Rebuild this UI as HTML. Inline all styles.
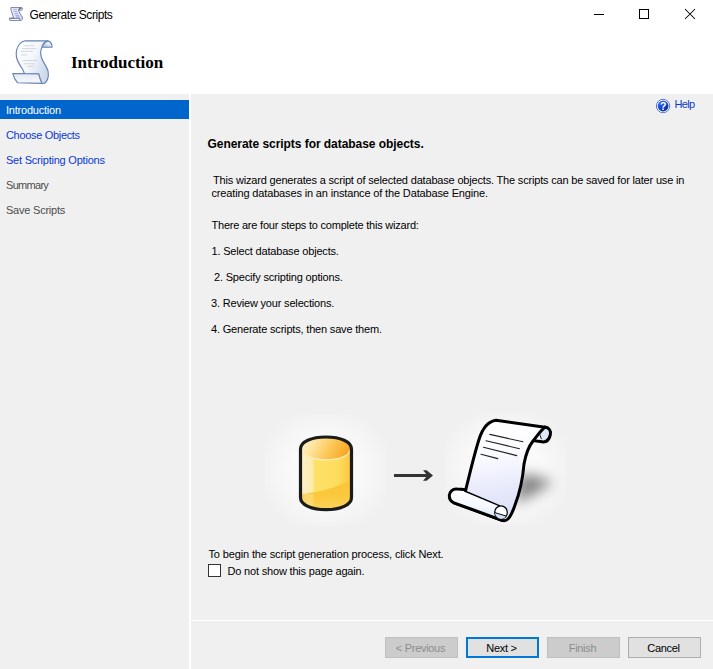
<!DOCTYPE html>
<html>
<head>
<meta charset="utf-8">
<title>Generate Scripts</title>
<style>
html,body{margin:0;padding:0;}
body{width:713px;height:669px;position:relative;overflow:hidden;background:#f0f0f0;font-family:"Liberation Sans",sans-serif;font-size:11px;color:#000;}
.abs{position:absolute;white-space:nowrap;}
#hdr{left:0;top:0;width:713px;height:94px;background:#fff;}
#title{left:29.5px;top:8px;font-size:12px;line-height:14px;letter-spacing:-0.45px;color:#000;}
#h1{left:71px;top:53px;font-family:"Liberation Serif",serif;font-weight:bold;font-size:17px;line-height:20px;color:#000;}
#vdiv{left:189px;top:94px;width:2px;height:575px;background:#fff;}
#hdiv{left:191px;top:620px;width:522px;height:1px;background:#fff;}
#sel{left:0;top:100px;width:189px;height:19px;background:#0066cc;}
.nav{left:6px;line-height:13px;letter-spacing:-0.22px;}
.lnk{color:#0a3ad2;}
.dis{color:#4d4d4d;}
.t{line-height:13px;letter-spacing:-0.18px;}
.btn{top:637px;width:69px;padding-right:2px;height:19px;border:1px solid #adadad;background:#e1e1e1;text-align:center;line-height:21px;letter-spacing:-0.3px;}
.btn.off{background:#cccccc;border-color:#bfbfbf;color:#8c8c8c;}
.btn.def{border:2px solid #0078d7;width:67px;height:17px;line-height:19px;}
</style>
</head>
<body>
<div id="hdr" class="abs"></div>
<div id="title" class="abs">Generate Scripts</div>
<div id="h1" class="abs">Introduction</div>

<div id="vdiv" class="abs"></div>
<div id="hdiv" class="abs"></div>
<div id="sel" class="abs"></div>
<div class="abs nav" style="top:104px;color:#fff;">Introduction</div>
<div class="abs nav lnk" style="top:129px;letter-spacing:-0.32px;">Choose Objects</div>
<div class="abs nav lnk" style="top:154px;">Set Scripting Options</div>
<div class="abs nav dis" style="top:179px;letter-spacing:-0.7px;">Summary</div>
<div class="abs nav dis" style="top:204px;">Save Scripts</div>

<div class="abs lnk" style="left:674.5px;top:98px;line-height:13px;letter-spacing:-0.65px;">Help</div>

<div class="abs" style="left:207.5px;top:137px;font-weight:bold;font-size:12px;line-height:14px;letter-spacing:-0.05px;">Generate scripts for database objects.</div>
<div class="abs t" style="left:213px;top:174px;">This wizard generates a script of selected database objects. The scripts can be saved for later use in</div>
<div class="abs t" style="left:211.5px;top:187px;letter-spacing:-0.15px;">creating databases in an instance of the Database Engine.</div>
<div class="abs t" style="left:211.5px;top:219px;letter-spacing:-0.22px;">There are four steps to complete this wizard:</div>
<div class="abs t" style="left:211.5px;top:245px;">1. Select database objects.</div>
<div class="abs t" style="left:214px;top:271px;">2. Specify scripting options.</div>
<div class="abs t" style="left:211px;top:297px;">3. Review your selections.</div>
<div class="abs t" style="left:211px;top:323px;">4. Generate scripts, then save them.</div>

<div class="abs t" style="left:208.5px;top:548px;letter-spacing:-0.14px;">To begin the script generation process, click Next.</div>
<div class="abs" style="left:208px;top:564px;width:11px;height:11px;border:1px solid #333;background:#fff;"></div>
<div class="abs t" style="left:227.5px;top:565px;">Do not show this page again.</div>

<!--ART-->
<svg class="abs" style="left:240px;top:390px;" width="370" height="160" viewBox="240 390 370 160">
<defs>
<radialGradient id="glow" cx="0.5" cy="0.5" r="0.57">
<stop offset="0" stop-color="#fcfcfc"/><stop offset="0.5" stop-color="#f9f9f9"/><stop offset="0.8" stop-color="#f4f4f4"/><stop offset="1" stop-color="#f0f0f0"/>
</radialGradient>
<linearGradient id="cylTop" x1="0" y1="0.2" x2="1" y2="0.45">
<stop offset="0" stop-color="#fef4cf"/><stop offset="0.3" stop-color="#fde295"/><stop offset="0.6" stop-color="#fcc858"/><stop offset="1" stop-color="#f6a520"/>
</linearGradient>
<linearGradient id="cylBody" x1="0" y1="0" x2="1" y2="0">
<stop offset="0" stop-color="#fde9a6"/><stop offset="0.05" stop-color="#fef0c4"/><stop offset="0.235" stop-color="#fdeab0"/><stop offset="0.27" stop-color="#fee16a"/><stop offset="0.75" stop-color="#fedc5c"/><stop offset="1" stop-color="#fbc440"/>
</linearGradient>
<linearGradient id="cylLow" x1="0" y1="0" x2="0" y2="1">
<stop offset="0" stop-color="#fbc535"/><stop offset="0.5" stop-color="#fbc93e"/><stop offset="1" stop-color="#fdd564"/>
</linearGradient>
<linearGradient id="paper" x1="0.4" y1="0" x2="0.55" y2="1">
<stop offset="0" stop-color="#ffffff"/><stop offset="0.35" stop-color="#fafbff"/><stop offset="0.68" stop-color="#e8e9fb"/><stop offset="1" stop-color="#d8e1fb"/>
</linearGradient>
<linearGradient id="roll" x1="0.3" y1="0" x2="0.1" y2="1">
<stop offset="0" stop-color="#ffffff"/><stop offset="0.5" stop-color="#f6f8ff"/><stop offset="1" stop-color="#cfdaf8"/>
</linearGradient>
<radialGradient id="shadow" cx="0.5" cy="0.5" r="0.5">
<stop offset="0" stop-color="#000" stop-opacity="0.5"/><stop offset="0.35" stop-color="#000" stop-opacity="0.33"/><stop offset="0.7" stop-color="#000" stop-opacity="0.1"/><stop offset="1" stop-color="#000" stop-opacity="0"/>
</radialGradient>
<filter id="blur" x="-50%" y="-50%" width="200%" height="200%"><feGaussianBlur stdDeviation="6.2"/></filter>
<clipPath id="cylClip"><path d="M300.5 449.2 C300.5 441.5 311.5 437 326 437 C340.5 437 351.5 441.5 351.5 449.2 L351.5 497.5 C351.5 505 340.5 509.6 326 509.6 C311.5 509.6 300.5 505 300.5 497.5 Z"/></clipPath>
</defs>
<!-- glows -->
<rect x="265" y="414" width="121" height="112" fill="url(#glow)"/>
<rect x="445" y="413" width="121" height="112" fill="url(#glow)"/>
<!-- cylinder -->
<g>
<path d="M300.5 449.2 C300.5 441.5 311.5 437 326 437 C340.5 437 351.5 441.5 351.5 449.2 L351.5 497.5 C351.5 505 340.5 509.6 326 509.6 C311.5 509.6 300.5 505 300.5 497.5 Z" fill="url(#cylBody)"/>
<g clip-path="url(#cylClip)">
<path d="M298 494.2 C312 493.5 336 489 354 478 L354 515 L298 515 Z" fill="url(#cylLow)"/>
<rect x="300" y="494" width="13.5" height="16" fill="#fff" opacity="0.22"/>
</g>
<ellipse cx="326" cy="449.3" rx="25" ry="11.4" fill="url(#cylTop)"/>
<path d="M302.3 450.5 C303 456 313 459.9 326 459.9 C339 459.9 349 456 349.7 450.5" fill="none" stroke="#fef0bd" stroke-width="1.5" opacity="0.95"/>
<path d="M300.5 449.2 C300.5 441.5 311.5 437 326 437 C340.5 437 351.5 441.5 351.5 449.2 L351.5 497.5 C351.5 505 340.5 509.6 326 509.6 C311.5 509.6 300.5 505 300.5 497.5 Z" fill="none" stroke="#1b1b1b" stroke-width="3.2" stroke-linejoin="round"/>
</g>
<!-- arrow -->
<path d="M394 474 H426.2 L423 470.2 H426.6 L433 475.5 L426.6 480.7 H423 L426.2 477 H394 Z" fill="#333"/>
<!-- scroll shadow -->
<path d="M519 475 C530 473 543 478 553 482.5 C543 488 531 498 515 503 Z" fill="#000" fill-opacity="0.47" filter="url(#blur)"/>
<!-- scroll -->
<g stroke-linejoin="round" stroke-linecap="round">
<!-- curl loop (top right) -->
<path d="M536 432 L545 427 C549 427.6 551.5 431 550.3 435 C549 440 546 442.4 542 441.8 L533 440.6 Z" fill="#dfe8f9" stroke="#000" stroke-width="3"/>
<path d="M535 439 L539.5 433.5 L541.5 439.5 Z" fill="#fff"/>
<path d="M539.5 433.8 L541.3 438.8" stroke="#000" stroke-width="0.9" fill="none"/>
<!-- paper -->
<path d="M465.8 489.5 C469 477 474 455 479 439.5 C482 430 487 421.5 496 420.3 L545 427.2 C541 430 537 436 533 441 C529 446 526 453 524 464 C523 476 520 492 515 505 C513 511 511 516 508 519 C506 520.8 504 521 502 520.3 L454 502.8 Z" fill="url(#paper)" stroke="#000" stroke-width="3"/>
<!-- bottom roll fill -->
<path d="M457 489 C453 488.5 449.5 491.5 449.3 495.5 C449.2 499 451 501.5 454 502.8 L497 518.5 C502 520.5 507 518 507.5 513 C508 508.5 504 506 499.5 505.8 L464 490.8 C461 489.5 459 489.2 457 489 Z" fill="url(#roll)"/>
<!-- thick outline of roll left cap and bottom -->
<path d="M465.8 489.8 C462 489.2 459.5 489 457 489 C453 488.5 449.5 491.5 449.3 495.5 C449.2 499 451 501.5 454 502.8 L502 520.3" fill="none" stroke="#000" stroke-width="3"/>
<!-- thin roll top edge -->
<path d="M464.6 491 L499.3 505.7" fill="none" stroke="#000" stroke-width="1.4"/>
<!-- roll end -->
<ellipse cx="501" cy="512.4" rx="6.3" ry="6.6" fill="#fff" stroke="#000" stroke-width="1.2"/>
<path d="M495 512.8 L505.8 516.2 C504.5 518.5 502 519.2 499.5 518.6 C497 517.8 495.2 515.5 495 512.8 Z" fill="#d5dff9"/>
<path d="M495.2 512.7 L506 516" stroke="#000" stroke-width="1" fill="none"/>
<!-- text lines -->
<g stroke="#222" stroke-width="1.1" fill="none">
<path d="M489.8 434.4 L522.9 441.8"/>
<path d="M486 440.7 L519.5 448.7"/>
<path d="M483.4 447.3 L516.8 455.6"/>
<path d="M481 454.2 L497.8 458.6"/>
</g>
</g>
</svg>
<!--/ART-->
<!--ICONS-->
<!-- window controls -->
<svg class="abs" style="left:585px;top:0;" width="128" height="30" viewBox="585 0 128 30" shape-rendering="crispEdges">
<rect x="594" y="14" width="10" height="1" fill="#000"/>
<rect x="639.5" y="9.5" width="9" height="9" fill="none" stroke="#000" stroke-width="1"/>
<g shape-rendering="geometricPrecision" stroke="#000" stroke-width="1.05" fill="none"><path d="M685 9 L695 19 M695 9 L685 19"/></g>
</svg>
<!-- title icon -->
<svg class="abs" style="left:6px;top:4px;" width="20" height="20" viewBox="6 4 20 20">
<defs><linearGradient id="ti" x1="0" y1="0" x2="1" y2="1"><stop offset="0" stop-color="#f6f8ff"/><stop offset="1" stop-color="#d0d8f6"/></linearGradient></defs>
<path d="M10.8 7.6 L21.5 7.6 C22.6 7.8 22.8 9.6 21.8 10.2 L18.6 10.2 C19.2 12.5 21 15 22.2 17 C22.8 18.5 22.2 20 21 20.4 L9.8 20.4 L9.4 18.2 L13.6 18.2 C13 15 11 11.5 10.8 7.6 Z" fill="url(#ti)" stroke="#7a839c" stroke-width="1" stroke-linejoin="round"/>
<path d="M9.8 18.3 L19.4 18.3 L19.8 20.3" fill="none" stroke="#6f7892" stroke-width="1"/>
<rect x="10.6" y="19" width="8.6" height="0.9" fill="#f4fbff"/>
<path d="M18.7 10.1 C19 8.8 20 8 21.6 7.9" fill="none" stroke="#5a6380" stroke-width="1.1"/>
<g stroke="#8290e0" stroke-width="0.7"><path d="M13.2 9.6 H16.8 M13.4 11.6 H17.4 M14.4 13.6 H18 M15.4 15.6 H19 M16 17 H19.6"/></g>
</svg>
<!-- header icon -->
<svg class="abs" style="left:5px;top:35px;" width="55" height="55" viewBox="5 35 55 55">
<defs>
<linearGradient id="hp" x1="0" y1="0" x2="1" y2="0.6"><stop offset="0" stop-color="#ffffff"/><stop offset="0.55" stop-color="#f4f7fb"/><stop offset="1" stop-color="#cfd9e8"/></linearGradient>
<linearGradient id="hc" x1="0" y1="1" x2="1" y2="0"><stop offset="0" stop-color="#9fb0c8"/><stop offset="0.6" stop-color="#e6ecf4"/><stop offset="1" stop-color="#ffffff"/></linearGradient>
<linearGradient id="hr" x1="0" y1="0" x2="0" y2="1"><stop offset="0" stop-color="#e3e9f3"/><stop offset="1" stop-color="#f8fafd"/></linearGradient>
</defs>
<!-- curl back -->
<path d="M42 47.3 C42.3 45 43.6 42.6 47.8 40.9 C50.5 41.5 52 44.5 52 47.3 Z" fill="url(#hc)" stroke="#6482b6" stroke-width="1.1" stroke-linejoin="round"/>
<!-- bottom roll -->
<path d="M12.8 73.6 L39 73.8 L42 83.4 L17.6 82.8 C15.4 80.5 13.6 77 12.8 73.6 Z" fill="url(#hr)" stroke="#6482b6" stroke-width="1.1" stroke-linejoin="round"/>
<!-- paper -->
<path d="M25.1 40.7 L47.8 40.9 C44 42.4 42.3 44.8 42 47.3 C40.2 50.5 40.4 54.5 41.6 58 C43 62 46.6 66.5 47.9 70.5 C48.8 75 48 79.6 46 82 C44.8 83.3 43.2 83.6 42 83.4 C40.8 81 39.6 77.5 38.8 73.8 L24.3 73.5 C23.8 71.5 23 70 22.4 69 C20 65.5 17.5 61.5 16.4 57 C15.8 52 16.6 47.5 19.6 44 C21 42.3 23 41 25.1 40.7 Z" fill="url(#hp)" stroke="#6482b6" stroke-width="1.15" stroke-linejoin="round"/>
<g stroke="#cdd4de" stroke-width="0.9" fill="none">
<path d="M24.3 45.7 H33.8 M21.9 48.6 H36.3 M21 51.4 H33 M21 54.9 H27.2 M22.7 60.5 H37.5 M23.9 63.8 H34.6 M27.2 66.4 H33.8"/>
</g>
</svg>
<!-- help icon -->
<svg class="abs" style="left:654px;top:97px;" width="18" height="18" viewBox="654 97 18 18">
<defs><linearGradient id="hb" x1="0.15" y1="0.1" x2="0.85" y2="0.9"><stop offset="0" stop-color="#3a6cf0"/><stop offset="0.5" stop-color="#1247d0"/><stop offset="1" stop-color="#022a98"/></linearGradient></defs>
<circle cx="663.1" cy="106" r="6.7" fill="#fff" stroke="#4a68c4" stroke-width="0.9"/>
<circle cx="663.1" cy="106" r="5.4" fill="url(#hb)"/>
<text x="663.1" y="109.8" text-anchor="middle" font-family="Liberation Sans, sans-serif" font-weight="bold" font-size="10.5" fill="#fff">?</text>
</svg>
<!--/ICONS-->
<div class="abs btn off" style="left:385px;">&lt; Previous</div>
<div class="abs btn def" style="left:466px;">Next &gt;</div>
<div class="abs btn off" style="left:547px;">Finish</div>
<div class="abs btn" style="left:628px;">Cancel</div>
</body>
</html>
